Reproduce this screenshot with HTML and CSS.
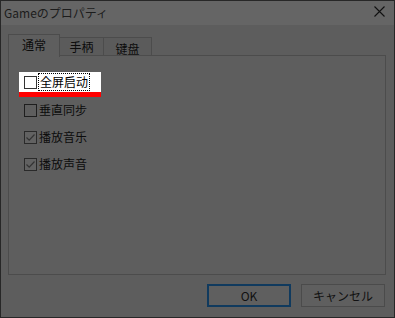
FILE: index.html
```html
<!DOCTYPE html>
<html lang="ja">

<head>
    <meta charset="UTF-8">
    <title>Gameのプロパティ</title>
    <link rel="stylesheet" href="styles.css">
</head>

<body>
    <div class="window">
        <div class="titlebar">
            <span class="title">Gameのプロパティ</span>
            <span class="close">
                <svg width="11" height="11" viewBox="0 0 11 11">
                    <path d="M0.5 0.5 L10.5 10.5 M10.5 0.5 L0.5 10.5" stroke="#111" stroke-width="1.1" fill="none" />
                </svg>
            </span>
        </div>

        <div class="content">
            <div class="tabs">
                <div class="tab active">通常</div>
                <div class="tab">手柄</div>
                <div class="tab">键盘</div>
            </div>
            <div class="panel">
                <div class="row focused">
                    <span class="box"></span>
                    <span class="label">全屏启动</span>
                </div>
                <div class="row">
                    <span class="box"></span>
                    <span class="label">垂直同步</span>
                </div>
                <div class="row">
                    <span class="box checked">
                        <svg width="11" height="11" viewBox="0 0 11 11">
                            <path d="M1.5 5.5 L4.2 8.2 L9.5 2.5" stroke="#333" stroke-width="1.2" fill="none" />
                        </svg>
                    </span>
                    <span class="label">播放音乐</span>
                </div>
                <div class="row">
                    <span class="box checked">
                        <svg width="11" height="11" viewBox="0 0 11 11">
                            <path d="M1.5 5.5 L4.2 8.2 L9.5 2.5" stroke="#333" stroke-width="1.2" fill="none" />
                        </svg>
                    </span>
                    <span class="label">播放声音</span>
                </div>
            </div>
            <div class="buttons">
                <button class="btn default">OK</button>
                <button class="btn">キャンセル</button>
            </div>
        </div>
    </div>
</body>

</html>
```

FILE: styles.css
```css
* {
    margin: 0;
    padding: 0;
    box-sizing: border-box;
    font-family: "Noto Sans CJK JP", "Noto Sans CJK SC", sans-serif;
}

body {
    background: #1c1c1c;
}

.window {
    width: 395px;
    height: 318px;
    border: 1px solid #272727;
    background: #5d5d5d;
    display: flex;
    flex-direction: column;
    color: #0c0c0c;
}

.titlebar {
    height: 24px;
    background: #656565;
    display: flex;
    align-items: center;
    justify-content: space-between;
    padding-left: 3px;
}

.title {
    font-size: 12px;
    color: #1c1c1c;
    margin-top: -2px;
}

.close {
    width: 30px;
    display: flex;
    justify-content: center;
    margin-top: -3px;
}

.content {
    flex: 1;
    padding: 9px 8px 0 7px;
    display: flex;
    flex-direction: column;
}

.tabs {
    display: flex;
    align-items: flex-end;
    height: 21px;
    position: relative;
    z-index: 1;
}

.tab {
    height: 18px;
    border: 1px solid #4c4c4c;
    border-bottom: none;
    background: #5b5b5b;
    font-size: 12px;
    line-height: 16px;
    padding-top: 1px;
    text-align: center;
    width: 45px;
    margin-left: -1px;
}

.tab:nth-child(3) {
    width: 49px;
    padding-top: 3px;
}

.tab.active {
    height: 23px;
    width: 52px;
    margin-left: 0;
    margin-bottom: -2px;
    background: #5e5e5e;
    line-height: 20px;
    padding-top: 0;
}

.panel {
    height: 220px;
    width: 378px;
    border: 1px solid #4c4c4c;
    background: #5e5e5e;
    padding: 16px 0 0 10px;
    display: flex;
    flex-direction: column;
    gap: 7px;
}

.row {
    display: flex;
    align-items: center;
    height: 20px;
    padding-left: 5px;
    font-size: 12px;
}

.row.focused {
    width: 82px;
    height: 25px;
    background: #fff;
    border-bottom: 5px solid #ff0000;
    margin-bottom: -4px;
    color: #000;
}

.box {
    width: 13px;
    height: 13px;
    border: 1px solid #1e1e1e;
    display: flex;
    align-items: center;
    justify-content: center;
    margin-right: 2px;
}

.box.checked {
    border-color: #2a2a2a;
    background: #626262;
}

.focused .box {
    border-color: #333;
}

.label {
    line-height: 16px;
}

.focused .label {
    outline: 1px dotted #000;
    padding: 0 1px;
}

.buttons {
    display: flex;
    justify-content: flex-end;
    gap: 10px;
    padding: 9px 1px 0 0;
}

.btn {
    width: 84px;
    height: 23px;
    border: 1px solid #4b4b4b;
    background: #5f5f5f;
    font-size: 12px;
    color: #111;
    font-family: "Noto Sans CJK JP", sans-serif;
}

.btn.default {
    border: 2px solid #103a5e;
}
```
